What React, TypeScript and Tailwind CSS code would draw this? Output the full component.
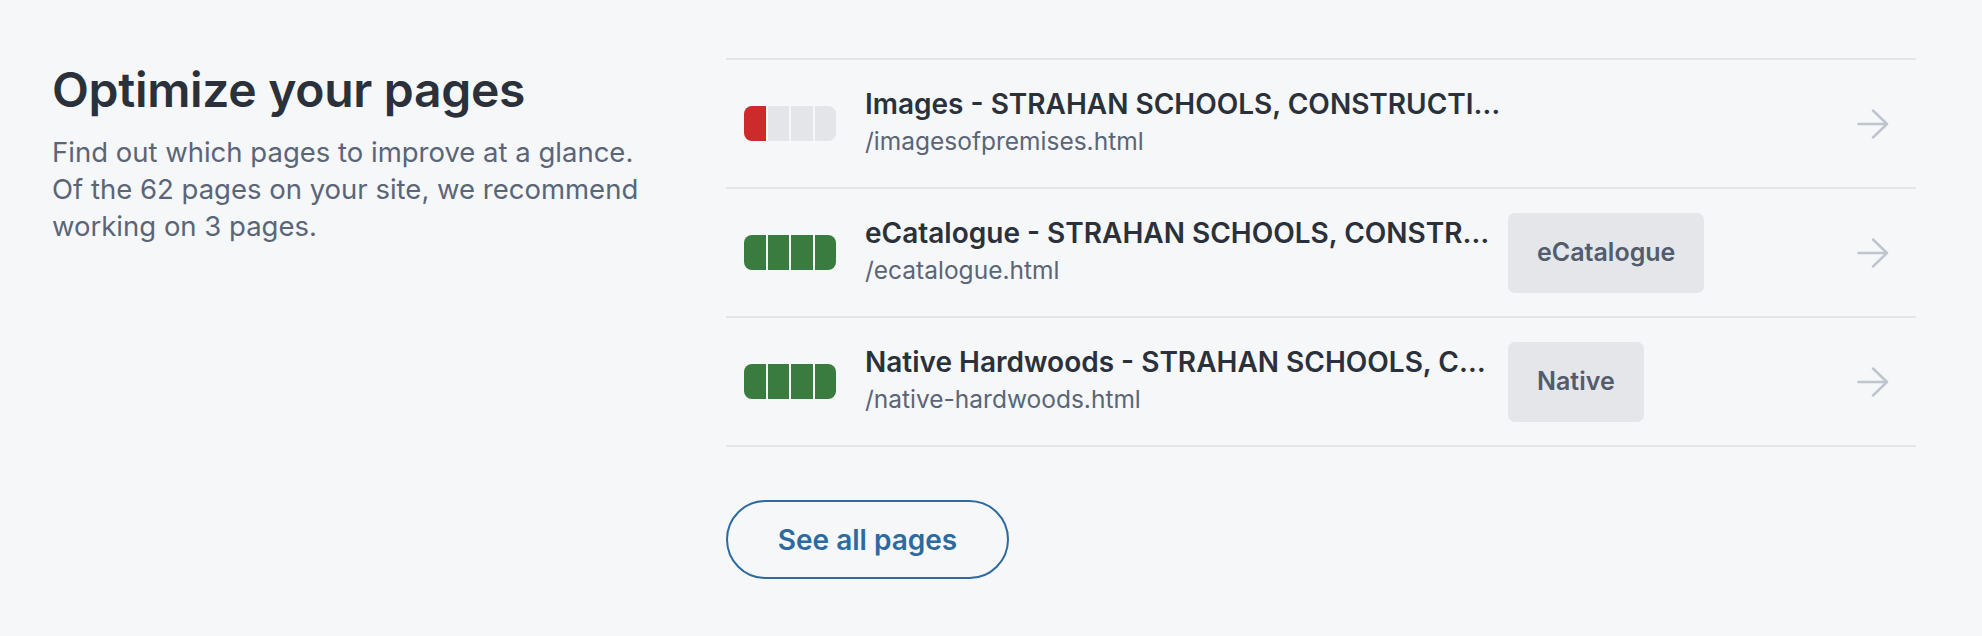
import { memo } from 'react';

type Row = {
  title: string;
  path: string;
  score: number;
  tone: 'red' | 'green';
  tag?: string;
};

const rows: Row[] = [
  {
    title: 'Images - STRAHAN SCHOOLS, CONSTRUCTION & OUTDOOR FURNITURE',
    path: '/imagesofpremises.html',
    score: 1,
    tone: 'red',
  },
  {
    title: 'eCatalogue - STRAHAN SCHOOLS, CONSTRUCTION & OUTDOOR FURNITURE',
    path: '/ecatalogue.html',
    score: 4,
    tone: 'green',
    tag: 'eCatalogue',
  },
  {
    title: 'Native Hardwoods - STRAHAN SCHOOLS, CONSTRUCTION & OUTDOOR FURNITURE',
    path: '/native-hardwoods.html',
    score: 4,
    tone: 'green',
    tag: 'Native',
  },
];

const ScoreBar = ({ score, tone }: { score: number; tone: Row['tone'] }) => (
  <div className="flex w-[92px] h-[35px] gap-[2px] rounded-[8px] overflow-hidden shrink-0">
    {[0, 1, 2, 3].map((i) => (
      <div
        key={i}
        className={
          i < score
            ? tone === 'red'
              ? 'flex-1 bg-[#cc2a2b]'
              : 'flex-1 bg-[#3a7b40]'
            : 'flex-1 bg-[#e3e5e9]'
        }
      />
    ))}
  </div>
);

const Arrow = () => (
  <svg width="32" height="30" viewBox="0 0 32 30" fill="none" className="shrink-0">
    <path d="M1.5 15H30M16 1.5L30 15L16 28.5" stroke="#bfc5cf" strokeWidth="2.5" strokeLinecap="round" strokeLinejoin="round" />
  </svg>
);

const PageRow = memo(function PageRow({ row }: { row: Row }) {
  return (
    <li className="flex items-center h-[129px] border-b-2 border-[#e3e5e9] pl-[18px] pr-[27px]">
      <ScoreBar score={row.score} tone={row.tone} />
      <div className="ml-[29px] mb-[4px] w-[640px] flex flex-col min-w-0 shrink-0">
        <span className="truncate text-[28px] leading-[36px] font-semibold text-[#2b313b]">{row.title}</span>
        <span className="mt-[3px] truncate text-[24.5px] leading-[32px] text-[#5b6578]">{row.path}</span>
      </div>
      {row.tag && (
        <span className="ml-[3px] h-[80px] flex items-center px-[29px] rounded-[7px] bg-[#e4e6ea] text-[25px] font-semibold text-[#525c6d]">
          {row.tag}
        </span>
      )}
      <div className="ml-auto">
        <Arrow />
      </div>
    </li>
  );
});

export default function App() {
  return (
    <div className="min-h-screen bg-[#f6f7f9] font-['Inter',sans-serif] flex pl-[52px] pr-[66px] pt-[58px]">
      <div className="w-[674px] shrink-0 pt-[3px]">
        <h2 className="text-[48px] leading-[58px] font-semibold text-[#2b313b] tracking-[-0.3px]">Optimize your pages</h2>
        <p className="mt-[15px] text-[27.5px] leading-[37px] text-[#5b6578]">
          Find out which pages to improve at a glance.
          <br />
          Of the 62 pages on your site, we recommend
          <br />
          working on 3 pages.
        </p>
      </div>
      <div className="flex-1 min-w-0">
        <ul className="border-t-2 border-[#e3e5e9]">
          {rows.map((row) => (
            <PageRow key={row.path} row={row} />
          ))}
        </ul>
        <button
          type="button"
          className="mt-[53px] w-[283px] h-[79px] rounded-full border-2 border-[#2d6aa0] text-[#2d6aa0] text-[28px] font-semibold"
        >
          See all pages
        </button>
      </div>
    </div>
  );
}
